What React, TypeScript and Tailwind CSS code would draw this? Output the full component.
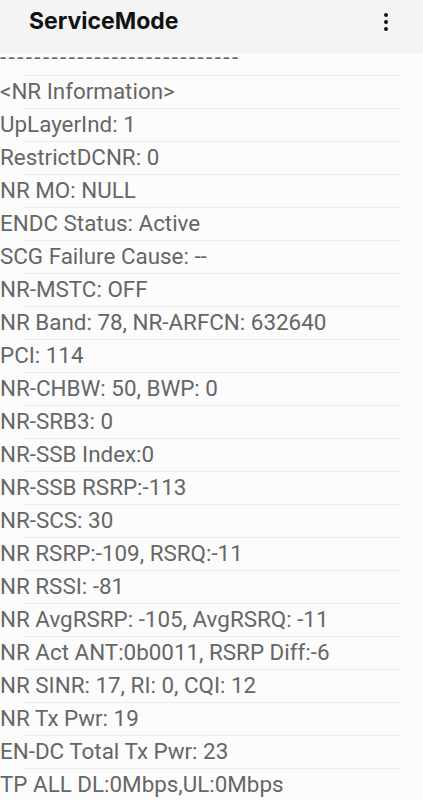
const rows = [
  "<NR Information>",
  "UpLayerInd: 1",
  "RestrictDCNR: 0",
  "NR MO: NULL",
  "ENDC Status: Active",
  "SCG Failure Cause: --",
  "NR-MSTC: OFF",
  "NR Band: 78, NR-ARFCN: 632640",
  "PCI: 114",
  "NR-CHBW: 50, BWP: 0",
  "NR-SRB3: 0",
  "NR-SSB Index:0",
  "NR-SSB RSRP:-113",
  "NR-SCS: 30",
  "NR RSRP:-109, RSRQ:-11",
  "NR RSSI: -81",
  "NR AvgRSRP: -105, AvgRSRQ: -11",
  "NR Act ANT:0b0011, RSRP Diff:-6",
  "NR SINR: 17, RI: 0, CQI: 12",
  "NR Tx Pwr: 19",
  "EN-DC Total Tx Pwr: 23",
  "TP ALL DL:0Mbps,UL:0Mbps",
];

function Row({ text }: { text: string }) {
  return (
    <div>
      <div className="h-[32px] flex items-center whitespace-nowrap">{text}</div>
      <div className="mx-[23px] h-px bg-[#ececec]" />
    </div>
  );
}

export default function App() {
  return (
    <div
      className="w-[423px] h-[800px] overflow-hidden bg-[#fcfcfc]"
      style={{ fontFamily: "Roboto, 'Noto Sans', sans-serif" }}
    >
      <header className="h-[53px] bg-[#f4f4f4] flex items-center justify-between pl-[29px] pr-[33px]">
        <h1
          className="text-[23px] font-bold text-[#111] -mt-[10px]"
          style={{ fontFamily: "Inter, Roboto, sans-serif" }}
        >
          ServiceMode
        </h1>
        <svg width="8" height="24" viewBox="0 0 8 24" className="-mt-[10px]">
          <circle cx="4" cy="5" r="2" fill="#111" />
          <circle cx="4" cy="12" r="2" fill="#111" />
          <circle cx="4" cy="19" r="2" fill="#111" />
        </svg>
      </header>
      <div className="text-[22.4px] text-[#666]">
        <div className="h-[22px] flex items-start leading-[8px] whitespace-nowrap tracking-[2.4px]">
          ----------------------------
        </div>
        <div className="mx-[23px] h-px bg-[#ececec]" />
        {rows.map((r) => (
          <Row key={r} text={r} />
        ))}
      </div>
    </div>
  );
}
